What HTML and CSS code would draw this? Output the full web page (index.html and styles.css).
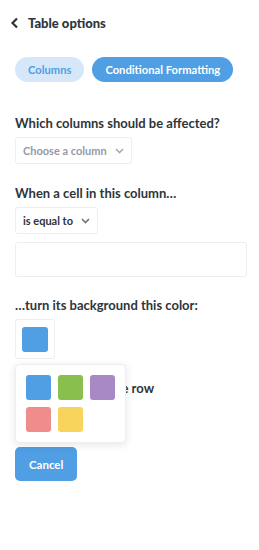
FILE: index.html
```html
<!DOCTYPE html>
<html lang="en">
<head>
    <meta charset="UTF-8">
    <title>Table options</title>
    <link rel="stylesheet" href="styles.css">
</head>
<body>
    <div class="panel">
        <div class="header">
            <svg class="back" width="9" height="12" viewBox="0 0 9 12"><path d="M7 1.5 L2.5 6 L7 10.5" fill="none" stroke="#2e353b" stroke-width="2.2"/></svg>
            <span>Table options</span>
        </div>

        <div class="tabs">
            <div class="tab">Columns</div>
            <div class="tab active">Conditional Formatting</div>
        </div>

        <h3 class="label">Which columns should be affected?</h3>
        <div class="select placeholder">Choose a column <span class="chev"><svg width="9" height="6" viewBox="0 0 9 6"><path d="M1 1 L4.5 4.5 L8 1" fill="none" stroke="#a5abb8" stroke-width="1.6"/></svg></span></div>

        <h3 class="label">When a cell in this column…</h3>
        <div class="select">is equal to <span class="chev"><svg width="9" height="6" viewBox="0 0 9 6"><path d="M1 1 L4.5 4.5 L8 1" fill="none" stroke="#6f7380" stroke-width="1.6"/></svg></span></div>
        <div class="input"></div>

        <h3 class="label">…turn its background this color:</h3>
        <div class="color-wrap">
            <div class="swatch-box"><div class="swatch blue"></div></div>
            <div class="popover">
                <div class="swatch blue"></div>
                <div class="swatch green"></div>
                <div class="swatch purple"></div>
                <div class="swatch red"></div>
                <div class="swatch yellow"></div>
            </div>
        </div>

        <h3 class="label row-label">Highlight the whole row</h3>
        <div class="toggle"></div>

        <button class="cancel">Cancel</button>
    </div>
</body>
</html>
```

FILE: styles.css
```css
body {
    margin: 0;
    font-family: Lato, "Noto Sans", sans-serif;
    color: #2e353b;
    background: #fff;
}

.panel {
    padding: 0 12px 0 15px;
}

.header {
    display: flex;
    align-items: center;
    gap: 9px;
    height: 46px;
    margin-left: -5px;
    font-size: 13px;
    font-weight: 900;
}

.tabs {
    display: flex;
    gap: 8px;
    margin-top: 11px;
}

.tab {
    height: 25px;
    line-height: 25px;
    padding: 0 13px;
    border-radius: 13px;
    background: #d6e7f9;
    color: #509ee3;
    font-size: 11.2px;
    font-weight: 700;
    white-space: nowrap;
}

.tab.active {
    background: #509ee3;
    color: #fff;
}

.label {
    margin: 0;
    font-size: 13px;
    font-weight: 700;
    line-height: 16px;
}

.tabs + .label {
    margin-top: 33px;
}

.select {
    display: inline-flex;
    align-items: center;
    height: 25px;
    margin-top: 6px;
    padding: 0 7px;
    border: 1px solid #eceef0;
    border-radius: 3px;
    font-size: 11px;
    font-weight: 700;
    white-space: nowrap;
}

.select.placeholder {
    color: #949aab;
}

.chev {
    display: flex;
    margin-left: 8px;
}

.select + .label {
    margin-top: 21px;
}

.input {
    height: 33px;
    margin-top: 8px;
    border: 1px solid #eceef0;
    border-radius: 3px;
}

.input + .label {
    margin-top: 20px;
}

.color-wrap {
    position: relative;
    margin-top: 6px;
}

.swatch-box {
    display: inline-block;
    padding: 7px 6px 6px;
    border: 1px solid #eceef0;
    border-radius: 3px;
}

.swatch {
    width: 25px;
    height: 25px;
    border-radius: 3px;
}

.swatch-box .swatch {
    width: 26px;
}

.blue { background: #509ee3; }
.green { background: #88bf4d; }
.purple { background: #a989c5; }
.red { background: #ef8c8c; }
.yellow { background: #f9d45c; }

.popover {
    position: absolute;
    top: 45px;
    left: 0;
    z-index: 2;
    display: grid;
    grid-template-columns: repeat(3, 25px);
    gap: 7px;
    padding: 10px;
    background: #fff;
    border: 1px solid #eceef0;
    border-radius: 4px;
    box-shadow: 0 2px 8px rgba(0, 0, 0, 0.1);
}

.row-label {
    margin-top: 18px;
}

.toggle {
    width: 40px;
    height: 20px;
    margin-top: 8px;
    border-radius: 10px;
    background: #e6e8ec;
}

.cancel {
    display: block;
    margin-top: 23px;
    height: 34px;
    padding: 0 14px;
    border: none;
    border-radius: 5px;
    background: #509ee3;
    color: #fff;
    font-family: Lato, "Noto Sans", sans-serif;
    font-size: 11.5px;
    font-weight: 700;
}
```
